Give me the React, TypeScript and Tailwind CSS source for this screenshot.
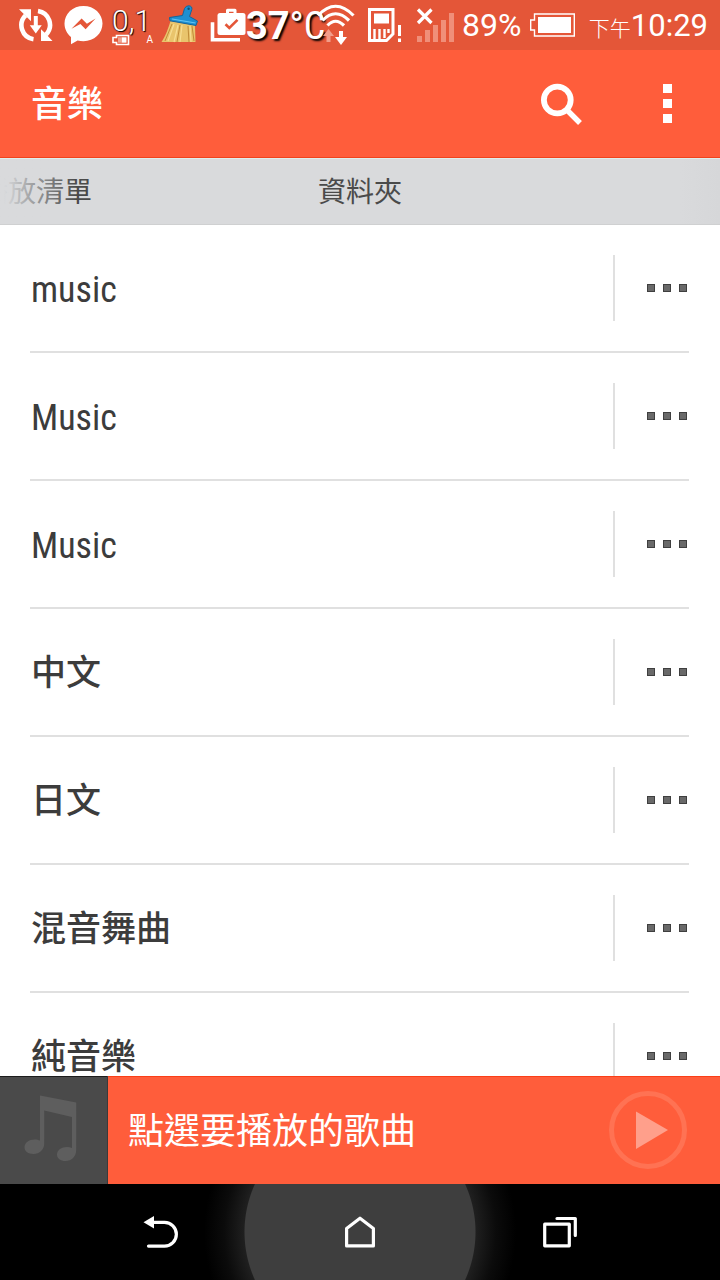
import React from "react";

const folders = ["music", "Music", "Music", "中文", "日文", "混音舞曲", "純音樂"];

function SyncIcon() {
  return (
    <svg className="h-[36px] w-[36px] shrink-0" viewBox="18 7 36 36" aria-hidden="true">
      <g fill="none" stroke="#fff" strokeWidth="4.6">
        <path d="M33.5 39.2A14 14 0 0 1 25.6 15.4" />
        <path d="M38 11A14 14 0 0 1 46 34.6" />
      </g>
      <g fill="#fff">
        <path d="M19 9.3L31 9.3L31 21.3L27 17.3L23.3 13.6Z" />
        <path d="M52.5 41L41 41L41 29.3L45 33L48.5 36.8Z" />
        <path d="M33.8 16h4v9.2h4L35.8 33.4l-6-8.2h4z" />
      </g>
    </svg>
  );
}

function MessengerIcon() {
  return (
    <svg className="ml-[10px] h-[40px] w-[40px] shrink-0" viewBox="64 6 40 40" aria-hidden="true">
      <path
        fill="#fff"
        d="M83.5 7C72.7 7 64.5 14.8 64.5 24.600c0 5.600 2.500 10.200 6.500 13.400V45.200l6.600-3.700c1.900.5 3.800.8 5.900.8 10.700 0 19-7.900 19-17.700C102.500 14.800 94.200 7 83.500 7z"
      />
      <path fill="#e45638" d="M71.500 29.800L81.600 19.500l5.300 5.200 8.700-5.200L85.600 30.200l-5.200-5.200z" />
    </svg>
  );
}

function BroomIcon() {
  return (
    <svg className="ml-[5px] h-[40px] w-[40px] shrink-0" viewBox="160 6 40 40" aria-hidden="true">
      <path d="M170.500 22L195 26L195.500 43L161.500 43C166 36 168 30 170.500 22z" fill="#e9c46c" />
      <path
        d="M172 25L165 42M180 26L177 43M188 27L189 43M192 27L194 42"
        stroke="#c08c38"
        strokeWidth="1"
        fill="none"
      />
      <path d="M174 25L168 42M178 26L174 43M182 26L180 43M190 27L191 43" stroke="#f7dd92" strokeWidth="1.200" fill="none" />
      <path
        d="M169.500 18.500L182.500 16.500L184.500 9.500Q186 6.500 189 6.800Q192.500 7.300 191.800 10.500L189.500 17.500L197.500 22L196 26.500L170 21.800z"
        fill="#1d8fd1"
        stroke="#14659c"
        strokeWidth="1"
      />
      <path d="M172 20L195.500 24" stroke="#63c3f2" strokeWidth="1.200" />
      <circle cx="188.600" cy="9.800" r="1.200" fill="#14506f" />
    </svg>
  );
}

function BagIcon() {
  return (
    <svg className="ml-[10px] h-[36px] w-[36px] shrink-0" viewBox="210 8 36 36" aria-hidden="true">
      <path d="M212.500 23.300V40.700H240" fill="none" stroke="#fff" strokeWidth="3.600" />
      <path d="M227.500 15V11.300H235V15" fill="none" stroke="#fff" strokeWidth="3" strokeLinejoin="round" />
      <rect x="217.500" y="14" width="28" height="22" rx="2.500" fill="#fff" />
      <path d="M225.500 25.300L229.300 29L237.500 20.800" fill="none" stroke="#e45638" strokeWidth="2.600" />
    </svg>
  );
}

function WifiIcon() {
  return (
    <svg className="-ml-[8px] h-[42px] w-[40px] shrink-0" viewBox="316 5 40 42" aria-hidden="true">
      <g fill="none" stroke="#fff" strokeWidth="3.200">
        <path d="M318 16.500Q335.500-2 353.500 16.500" />
        <path d="M322.500 21.500Q335.500 8 349 21.500" />
        <path d="M327.500 26.500Q335.500 18 344 26.500" />
      </g>
      <path d="M328.500 30l5.500 7h-3.500v6h-4v-6H323z" fill="#f29d8a" />
      <path d="M339 32h4v6h4l-6 8-6-8h4z" fill="#fff" />
    </svg>
  );
}

function SimIcon() {
  return (
    <svg className="ml-[12px] h-[36px] w-[34px] shrink-0" viewBox="368 7 34 36" aria-hidden="true">
      <path d="M369.500 9.500H393V34L386.500 40.500H369.500z" fill="none" stroke="#fff" strokeWidth="3" />
      <path d="M374 13.500h15v10h-15z" fill="#fff" />
      <path d="M374.500 29v10M379.500 29v10M384.500 29v9M388.500 29v4" stroke="#fff" strokeWidth="2.400" />
      <path d="M398 25h3v11h-3zM398 38.500h3v3.500h-3z" fill="#fff" />
    </svg>
  );
}

function SignalIcon() {
  return (
    <svg className="ml-[14px] h-[36px] w-[38px] shrink-0" viewBox="416 6 38 36" aria-hidden="true">
      <path
        d="M417 35h5v6h-5zM425 29h5v12h-5zM433 24h5v17h-5zM441 19h5v22h-5zM449 12h5v29h-5z"
        fill="#f08f79"
      />
      <path d="M418 8.500L431.500 22M431.500 8.500L418 22" stroke="#fff" strokeWidth="3.200" />
    </svg>
  );
}

function BatteryIcon() {
  return (
    <svg className="ml-[9px] h-[24px] w-[45px] shrink-0" viewBox="531 13 45 24" aria-hidden="true">
      <path d="M535.500 14H575.300V36H535.500V30H531.700V20H535.500z" fill="none" stroke="#fff" strokeWidth="1.400" />
      <path d="M539 17h33v16h-33z" fill="#fff" />
    </svg>
  );
}

function StatusBar() {
  return (
    <div className="flex h-[50px] shrink-0 items-center overflow-hidden bg-[#e45638] pr-[12px] pl-[18px] font-['Roboto','Noto_Sans_CJK_TC',sans-serif] text-[32px] leading-none whitespace-nowrap text-white">
      <SyncIcon />
      <MessengerIcon />
      <div className="ml-[8px] flex w-[43px] shrink-0 flex-col pt-[4px]">
        <span className="text-[30px] leading-[26px] font-light [text-shadow:1px_1px_1px_#000,-1px_0_1px_#70281a]">0,1</span>
        <span className="flex items-center justify-between pr-[2px]">
          <svg className="h-[12px] w-[18px]" viewBox="0 0 18 12" aria-hidden="true">
            <path d="M4.500 1.500H16.500V10.500H4.500V8.500H1V3.500H4.500z" fill="none" stroke="#fff" strokeWidth="1.600" />
            <path d="M9.500 3.300h5v5.400h-5z" fill="#fff" />
            <path d="M6 3.300h3.500v5.400H6z" fill="#f0a695" />
          </svg>
          <span className="text-[10px] leading-[12px]">A</span>
        </span>
      </div>
      <BroomIcon />
      <BagIcon />
      <span className="flex w-[78px] shrink-0 items-center pt-[2px] text-[38px] leading-[40px] [text-shadow:2px_2px_2px_#000]">
        <span className="font-bold">37</span>
        <span className="font-['Roboto_Condensed','Liberation_Sans_Narrow',sans-serif]">°C</span>
      </span>
      <WifiIcon />
      <SimIcon />
      <SignalIcon />
      <span className="ml-[8px]">89%</span>
      <BatteryIcon />
      <span className="ml-auto flex items-baseline">
        <span className="text-[21px] font-light">下午</span>
        <span className="text-[31px]">10:29</span>
      </span>
    </div>
  );
}

function Header() {
  return (
    <header className="flex h-[108px] shrink-0 items-center border-b border-[#f0431d] bg-[#ff5d3b] pl-[31px] text-white">
      <h1 className="flex-1 pt-[3px] text-[36px] leading-[48px] font-medium">音樂</h1>
      <button type="button" aria-label="搜尋" className="flex h-full w-[106px] items-center justify-center">
        <svg className="h-[42px] w-[42px]" viewBox="540 82 42 42" aria-hidden="true">
          <circle cx="557.300" cy="99" r="13.400" fill="none" stroke="#fff" strokeWidth="5.800" />
          <path d="M566.500 108.500L580 122" stroke="#fff" strokeWidth="5.400" />
        </svg>
      </button>
      <button type="button" aria-label="更多選項" className="flex h-full w-[106px] flex-col items-center justify-center gap-[6px]">
        <span className="h-[9px] w-[9px] bg-white" />
        <span className="h-[9px] w-[9px] bg-white" />
        <span className="h-[9px] w-[9px] bg-white" />
      </button>
    </header>
  );
}

function Tabs() {
  return (
    <nav className="relative grid h-[67px] shrink-0 grid-cols-3 items-center overflow-hidden border-t border-b border-t-[#dfeeec] border-b-[#cfd0d1] bg-[#d9dadc] pt-[2px] text-[28px] leading-[40px] text-[#4a4a4a]">
      <button type="button" className="-ml-[20px] text-left whitespace-nowrap">播放清單</button>
      <button type="button" aria-current="page" className="text-center">資料夾</button>
      <span className="pointer-events-none absolute inset-y-0 left-0 w-[76px] bg-linear-to-r from-[#d9dadc] from-5% to-transparent" />
      <span className="pointer-events-none absolute inset-y-0 right-0 w-[40px] bg-linear-to-l from-[#d6d7d9] to-transparent" />
    </nav>
  );
}

function FolderRow({ name }: { name: string }) {
  const isLatin = /^[\w\s]+$/.test(name);
  return (
    <li className="flex h-[128px] items-center border-b-2 border-[#e0e0e0]">
      <button
        type="button"
        className={`h-full min-w-0 flex-1 truncate pt-[4px] pl-px text-left font-['Roboto_Condensed','Liberation_Sans_Narrow','Noto_Sans_CJK_TC',sans-serif] leading-[48px] text-[#3c3c3c] ${isLatin ? "text-[36px]" : "text-[35px] font-medium"}`}
      >
        {name}
      </button>
      <button
        type="button"
        aria-label={`${name} 選項`}
        className="flex h-[66px] w-[76px] items-center justify-end gap-[8px] border-l-2 border-[#e0e0e0] pr-[2px]"
      >
        <span className="h-[8px] w-[8px] border border-[#3f3f3f] bg-[#696969]" />
        <span className="h-[8px] w-[8px] border border-[#3f3f3f] bg-[#696969]" />
        <span className="h-[8px] w-[8px] border border-[#3f3f3f] bg-[#696969]" />
      </button>
    </li>
  );
}

function PlayerBar() {
  return (
    <section className="flex h-[108px] shrink-0 items-center bg-[#ff5d3b] text-white shadow-[inset_0_1px_0_#fb3e16]">
      <div className="flex h-full w-[108px] shrink-0 items-center justify-center border-r border-r-[#3a3a3a] bg-[#4a4a4a] shadow-[inset_0_1px_0_#1c1c1c]">
        <svg className="h-[70px] w-[62px]" viewBox="22 1095 62 70" aria-hidden="true">
          <path
            fill="#5e5e5e"
            d="M39 1095.500L75.200 1102.500V1150C75.200 1156.500 70.500 1161 64.500 1161C59.500 1161 56 1158.400 56 1154.500C56 1150 60.500 1147 66 1147C67.800 1147 69.500 1147.300 71 1148V1117L43.200 1110.500V1143.500C43.200 1149.500 38.500 1154 32.500 1154C27.300 1154 23.500 1151.500 23.500 1147.300C23.500 1142.800 28 1139.500 33.500 1139.500C35.500 1139.500 37.500 1140 39 1140.500z"
          />
        </svg>
      </div>
      <p className="min-w-0 flex-1 truncate pt-[3px] pl-[20px] text-[36px] leading-[48px]">點選要播放的歌曲</p>
      <button type="button" aria-label="播放" className="mr-[33px] shrink-0">
        <svg className="h-[78px] w-[78px]" viewBox="0 0 78 78" aria-hidden="true">
          <circle cx="39" cy="39" r="36.500" fill="none" stroke="#ff7253" strokeWidth="5" />
          <path d="M27 20.500L59 39L27 58z" fill="#ff9f8b" />
        </svg>
      </button>
    </section>
  );
}

function NavigationBar() {
  return (
    <nav className="relative grid h-[96px] shrink-0 grid-cols-3 overflow-hidden bg-black px-[60px]">
      <span className="absolute top-1/2 left-1/2 h-[320px] w-[320px] -translate-x-1/2 -translate-y-1/2 bg-[radial-gradient(circle,#3e3e3e_115px,#1f1f1f_116px,#0b0b0b_136px,#000000_156px)]" />
      <button type="button" aria-label="返回" className="relative flex items-center justify-center">
        <svg className="h-[34px] w-[36px]" viewBox="142 1215 36 34" aria-hidden="true">
          <path d="M152 1222.300H164.500A11.900 11.900 0 0 1 164.500 1246.100H148.500" fill="none" stroke="#fff" strokeWidth="3.200" strokeLinecap="round" />
          <path d="M143.500 1222.300L154 1216v12.600z" fill="#fff" />
        </svg>
      </button>
      <button type="button" aria-label="首頁" className="relative flex items-center justify-center">
        <svg className="h-[34px] w-[32px]" viewBox="344 1215 32 34" aria-hidden="true">
          <path d="M346.600 1245.900V1228.500L360 1218.200L373.400 1228.500V1245.900z" fill="none" stroke="#fff" strokeWidth="3.200" strokeLinejoin="round" />
        </svg>
      </button>
      <button type="button" aria-label="最近的應用程式" className="relative flex items-center justify-center">
        <svg className="h-[34px] w-[36px]" viewBox="542 1215 36 34" aria-hidden="true">
          <g fill="none" stroke="#fff" strokeWidth="3.200" strokeLinejoin="round" strokeLinecap="round">
            <path d="M544.700 1224.200h24.600v21.600h-24.600z" />
            <path d="M557 1218.500H575.300V1235.500" />
          </g>
        </svg>
      </button>
    </nav>
  );
}

export default function App() {
  return (
    <div className="flex h-screen flex-col bg-white font-['Roboto','Noto_Sans_CJK_TC',sans-serif]">
      <StatusBar />
      <Header />
      <Tabs />
      <main className="min-h-0 flex-1 overflow-y-auto [scrollbar-width:none]">
        <ul className="mr-[31px] ml-[30px]">
          {folders.map((name, index) => (
            <FolderRow key={index} name={name} />
          ))}
        </ul>
      </main>
      <PlayerBar />
      <NavigationBar />
    </div>
  );
}
